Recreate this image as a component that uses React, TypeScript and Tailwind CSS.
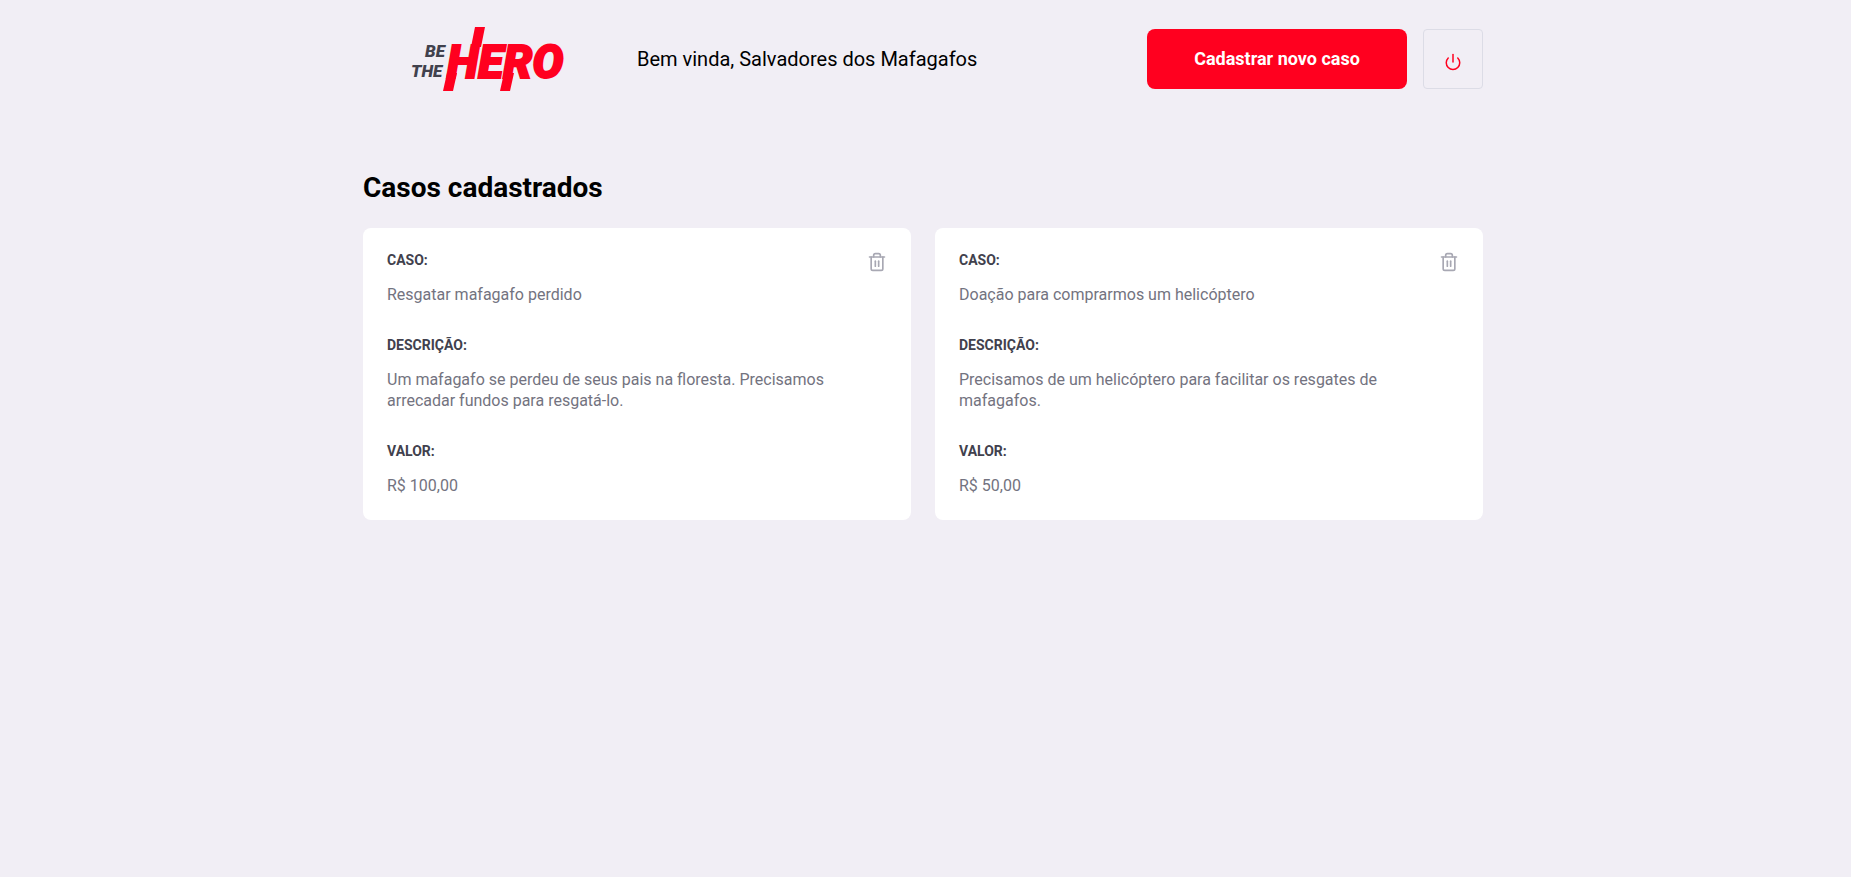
import { FiPower, FiTrash2 } from "react-icons/fi";

interface Incident {
  id: number;
  title: string;
  description: string;
  value: string;
}

const incidents: Incident[] = [
  {
    id: 1,
    title: "Resgatar mafagafo perdido",
    description:
      "Um mafagafo se perdeu de seus pais na floresta. Precisamos arrecadar fundos para resgatá-lo.",
    value: "R$ 100,00",
  },
  {
    id: 2,
    title: "Doação para comprarmos um helicóptero",
    description:
      "Precisamos de um helicóptero para facilitar os resgates de mafagafos.",
    value: "R$ 50,00",
  },
];

function Logo() {
  return (
    <svg
      viewBox="0 0 250 64"
      role="img"
      aria-label="Be The Hero"
      className="h-16 w-[250px] shrink-0 font-['Roboto',sans-serif] font-black italic"
    >
      <g fill="#41414d" fontSize="17">
        <text x="62" y="30">BE</text>
        <text x="48" y="50">THE</text>
      </g>
      <g fill="#ff001f" stroke="#ff001f">
        <path
          d="M108 20 L112 0 H122 L118 20 Z M84 46 H94 L90 64 H80 Z M141 46 H151 L147 64 H137 Z"
          stroke="none"
        />
        <text x="84" y="51" fontSize="46" strokeWidth="2">HERO</text>
      </g>
    </svg>
  );
}

function Field({ label, children }: { label: string; children: string }) {
  return (
    <div>
      <dt className="mb-4 text-sm leading-4 font-bold text-[#41414d]">{label}</dt>
      <dd className="text-base leading-[21px] text-[#737380]">{children}</dd>
    </div>
  );
}

function IncidentCard({ incident }: { incident: Incident }) {
  return (
    <li className="relative rounded-lg bg-white p-6">
      <dl className="flex flex-col gap-8">
        <Field label="CASO:">{incident.title}</Field>
        <Field label="DESCRIÇÃO:">{incident.description}</Field>
        <Field label="VALOR:">{incident.value}</Field>
      </dl>
      <button
        type="button"
        aria-label="Excluir caso"
        className="absolute top-6 right-6 cursor-pointer hover:opacity-80"
      >
        <FiTrash2 size={20} color="#a8a8b3" />
      </button>
    </li>
  );
}

export default function App() {
  return (
    <div className="min-h-screen bg-[#f1eef5] pt-[27px] pr-[5px] pb-8 font-['Roboto',sans-serif] text-black antialiased">
      <div className="mx-auto max-w-[1180px] px-[30px]">
        <header className="flex items-center">
          <Logo />
          <span className="ml-6 text-xl leading-6">Bem vinda, Salvadores dos Mafagafos</span>
          <a
            href="#novo"
            className="ml-auto flex h-[60px] w-[260px] items-center justify-center rounded-lg bg-[#ff001f] text-lg font-bold text-white hover:brightness-90"
          >
            Cadastrar novo caso
          </a>
          <button
            type="button"
            aria-label="Sair"
            className="ml-4 flex size-[60px] cursor-pointer items-center justify-center rounded border border-[#dcdce6] pt-1.5"
          >
            <FiPower size={18} color="#ff001f" />
          </button>
        </header>

        <main>
          <h1 className="mt-20 mb-6 text-[28px] leading-[33px] font-bold">Casos cadastrados</h1>
          <ul className="grid grid-cols-2 gap-6">
            {incidents.map((incident) => (
              <IncidentCard key={incident.id} incident={incident} />
            ))}
          </ul>
        </main>
      </div>
    </div>
  );
}
